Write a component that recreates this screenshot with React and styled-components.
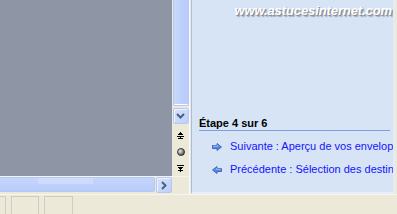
import React from 'react';
import styled, { createGlobalStyle } from 'styled-components';

const Global = createGlobalStyle`
  html, body {
    margin: 0;
    padding: 0;
    background: #ece9d8;
    overflow: hidden;
  }
`;

const Page = styled.div`
  width: 397px;
  height: 214px;
  display: flex;
  flex-direction: column;
  background: #ece9d8;
  font-family: 'Liberation Sans', Arial, sans-serif;
`;

const Top = styled.div`
  display: flex;
  height: 194px;
`;

const Editor = styled.div`
  width: 190px;
  flex-shrink: 0;
  display: flex;
  flex-direction: column;
  border-right: 1px solid #fbfbf8;
  box-sizing: border-box;
`;

const EditorRow = styled.div`
  flex: 1;
  display: flex;
  min-height: 0;
`;

const Canvas = styled.div`
  flex: 1;
  background: #8e95a4;
`;

const VScroll = styled.div`
  width: 17px;
  display: flex;
  flex-direction: column;
  align-items: center;
  background: #ece9d8;
`;

const VThumb = styled.div`
  box-sizing: border-box;
  width: 16px;
  height: 110px;
  margin-top: -4px;
  border: 1px solid #b4c8f6;
  border-radius: 0 0 2px 2px;
  background: linear-gradient(to right, #c8d8fc 0%, #bccffb 60%, #b9ccfa 100%);
  box-shadow: inset 0 -1px 0 #fff;
`;

const ArrowButton = styled.div`
  box-sizing: border-box;
  flex-shrink: 0;
  width: ${p => p.$w || 16}px;
  height: 16px;
  margin-top: ${p => p.$mt || 0}px;
  border: 1px solid #b7c9f2;
  border-radius: 2px;
  background: linear-gradient(135deg, #d6e2fd 0%, #bccffb 100%);
  box-shadow: inset 1px 1px 0 #eef3fe;
  display: flex;
  align-items: center;
  justify-content: center;
`;

const NavIcons = styled.div`
  display: flex;
  flex-direction: column;
  align-items: center;
  gap: 9px;
  padding-top: 8px;
`;

const HRow = styled.div`
  display: flex;
  height: 17px;
  border-top: 1px solid #f4f4f0;
`;

const HTrack = styled.div`
  box-sizing: border-box;
  flex: 1;
  height: 15px;
  border: 1px solid #b4c8f6;
  border-left: none;
  border-radius: 0 2px 2px 0;
  background:
    linear-gradient(to bottom, #cddcfd 0%, #cddcfd 45%, transparent 45%) 38px 0 / 55px 100% no-repeat,
    linear-gradient(to bottom, #c4d5fc 0%, #b9ccfa 100%);
  margin-right: 1px;
`;

const Corner = styled.div`
  width: 17px;
  background: #ece9d8;
`;

const Pane = styled.div`
  flex: 1;
  min-width: 0;
  overflow: hidden;
  box-sizing: border-box;
  margin-left: 1px;
  margin-right: 2px;
  border-left: 1px solid #a7bde9;
  border-right: 2px solid #e3edfa;
  border-bottom: 2px solid #e6eefa;
  background: #d6e4f6;
  display: flex;
  flex-direction: column;
  padding: 0 0 0 7px;
`;

const Watermark = styled.div`
  align-self: flex-end;
  margin: 3px 1px 0 0;
  font-family: 'Liberation Sans', Arial, sans-serif;
  font-weight: bold;
  font-style: italic;
  font-size: 13px;
  letter-spacing: -0.1px;
  color: #ffffff;
  text-shadow: 1px 1px 0 #8a8f98, 2px 2px 1px #a3a8b0;
`;

const StepTitle = styled.div`
  margin-top: 99px;
  margin-right: 3px;
  padding-bottom: 0;
  border-bottom: 1px solid #7d9ee0;
  font-weight: bold;
  font-size: 11px;
  color: #000;
  line-height: 13px;
`;

const LinkList = styled.div`
  display: flex;
  flex-direction: column;
  gap: 10px;
  padding: 9px 0 0 13px;
`;

const LinkRow = styled.div`
  display: flex;
  align-items: center;
  gap: 8px;
  white-space: nowrap;
  font-size: 11px;
  line-height: 13px;
  color: #1414ff;

  svg {
    flex-shrink: 0;
  }
`;

const StatusBar = styled.div`
  display: flex;
  gap: 5px;
  height: 20px;
  padding-top: 1px;
  box-sizing: border-box;
  border-top: 1px solid #f6f5ee;
`;

const StatusCell = styled.div`
  box-sizing: border-box;
  width: ${p => p.$w}px;
  height: 19px;
  border: 1px solid #cfcdc0;
  border-left-width: ${p => (p.$open ? 0 : 1)}px;
  border-bottom: none;
`;

const ChevronDown = () => (
  <svg width="9" height="6" viewBox="0 0 9 6">
    <path d="M1 1 L4.5 4.5 L8 1" fill="none" stroke="#4d6185" strokeWidth="2" />
  </svg>
);

const ChevronRight = () => (
  <svg width="6" height="9" viewBox="0 0 6 9">
    <path d="M1 1 L4.5 4.5 L1 8" fill="none" stroke="#4d6185" strokeWidth="2" />
  </svg>
);

const PrevPage = () => (
  <svg width="7" height="7" viewBox="0 0 7 7" shapeRendering="crispEdges">
    <path d="M3 0h1v1h1v1h1v1H1V2h1V1h1z" fill="#000" />
    <rect x="0" y="4" width="7" height="1" fill="#000" />
    <path d="M3 5h1v1h2v1H1V6h2z" fill="#000" />
  </svg>
);

const NextPage = () => (
  <svg width="7" height="7" viewBox="0 0 7 7" shapeRendering="crispEdges">
    <rect x="0" y="0" width="7" height="1" fill="#000" />
    <path d="M1 2h5v1H5v1H4v1H3V4H2V3H1z" fill="#000" />
    <path d="M1 5h5v1H4v1H3V6H1z" fill="#000" />
  </svg>
);

const BrowseBall = () => (
  <svg width="8" height="8" viewBox="0 0 8 8">
    <defs>
      <radialGradient id="ball" cx="0.35" cy="0.35" r="0.7">
        <stop offset="0" stopColor="#e8e8e8" />
        <stop offset="0.6" stopColor="#8c8c8c" />
        <stop offset="1" stopColor="#404040" />
      </radialGradient>
    </defs>
    <circle cx="4" cy="4" r="3.5" fill="url(#ball)" stroke="#202020" strokeWidth="0.8" />
  </svg>
);

const BlueArrow = ({ left }) => (
  <svg width="10" height="8" viewBox="0 0 10 8" style={left ? { transform: 'scaleX(-1)' } : undefined}>
    <path d="M0.5 2.5 H5 V0.5 L9.5 4 L5 7.5 V5.5 H0.5 Z" fill="#5b87e6" stroke="#2d55b8" strokeWidth="0.8" />
    <path d="M1.2 3.2 H5.6 V2" fill="none" stroke="#b9cff8" strokeWidth="0.8" />
  </svg>
);

const App = () => (
  <>
    <Global />
    <Page>
      <Top>
        <Editor>
          <EditorRow>
            <Canvas />
            <VScroll>
              <VThumb />
              <ArrowButton $mt={2}>
                <ChevronDown />
              </ArrowButton>
              <NavIcons>
                <PrevPage />
                <BrowseBall />
                <NextPage />
              </NavIcons>
            </VScroll>
          </EditorRow>
          <HRow>
            <HTrack />
            <ArrowButton $w={16}>
              <ChevronRight />
            </ArrowButton>
            <Corner />
          </HRow>
        </Editor>
        <Pane>
          <Watermark>www.astucesinternet.com</Watermark>
          <StepTitle>Étape 4 sur 6</StepTitle>
          <LinkList>
            <LinkRow>
              <BlueArrow />
              Suivante : Aperçu de vos enveloppes
            </LinkRow>
            <LinkRow>
              <BlueArrow left />
              Précédente : Sélection des destinataires
            </LinkRow>
          </LinkList>
        </Pane>
      </Top>
      <StatusBar>
        <StatusCell $w={6} $open />
        <StatusCell $w={28} />
        <StatusCell $w={29} />
      </StatusBar>
    </Page>
  </>
);

export default App;
